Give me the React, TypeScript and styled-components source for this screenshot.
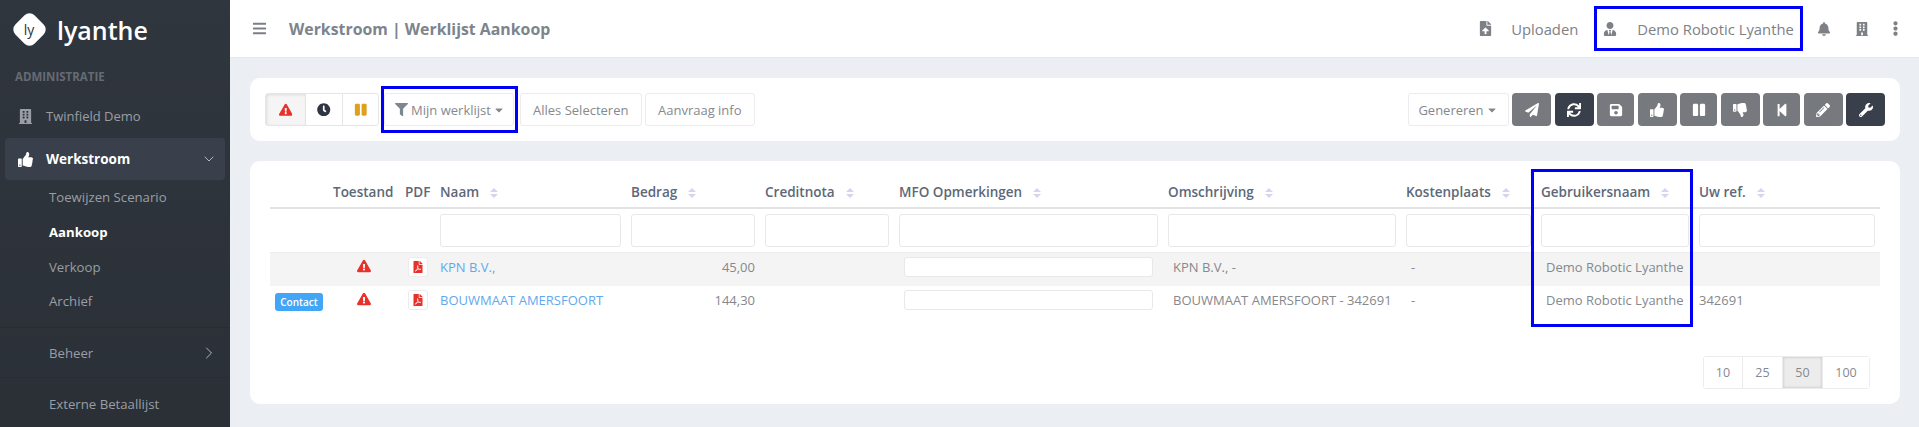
import React from 'react'
import styled, {createGlobalStyle} from 'styled-components'
import {ChevronDown, ChevronRight} from 'lucide-react'
import {
    FaBars, FaBell, FaBuilding, FaCaretDown, FaClock, FaEllipsisV,
    FaExclamationTriangle, FaFilePdf, FaFileUpload, FaFilter, FaPaperPlane, FaPause, FaPencilAlt,
    FaSave, FaStepBackward, FaSync, FaThumbsDown, FaThumbsUp, FaUserTie, FaWrench,
} from 'react-icons/fa'

const columns = [
    {width: 58},
    {width: 72, title: 'Toestand'},
    {width: 35, title: 'PDF'},
    {width: 191, title: 'Naam', sort: true, filter: true},
    {width: 134, title: 'Bedrag', sort: true, filter: true},
    {width: 134, title: 'Creditnota', sort: true, filter: true},
    {width: 269, title: 'MFO Opmerkingen', sort: true, filter: true},
    {width: 238, title: 'Omschrijving', sort: true, filter: true},
    {width: 135, title: 'Kostenplaats', sort: true, filter: true},
    {width: 158, title: 'Gebruikersnaam', sort: true, filter: true},
    {width: 186, title: 'Uw ref.', sort: true, filter: true},
]

const rows = [
    {contact: false, name: 'KPN B.V.,', amount: '45,00', description: 'KPN B.V., -', ref: ''},
    {contact: true, name: 'BOUWMAAT AMERSFOORT', amount: '144,30', description: 'BOUWMAAT AMERSFOORT - 342691', ref: '342691'},
]

const actions = [
    {icon: <FaPaperPlane/>, width: 39},
    {icon: <FaSync/>, width: 39, dark: true},
    {icon: <FaSave/>, width: 37},
    {icon: <FaThumbsUp/>, width: 39},
    {icon: <FaPause/>, width: 37},
    {icon: <FaThumbsDown/>, width: 39},
    {icon: <FaStepBackward/>, width: 37},
    {icon: <FaPencilAlt/>, width: 39},
    {icon: <FaWrench/>, width: 39, dark: true},
]

const SortIcon = () => (
    <SortSvg viewBox="0 0 8 10" width="8" height="10">
        <path d="M4 0 8 4H0Z M4 10 0 6H8Z" fill="#d6d4f2"/>
    </SortSvg>
)

export default function App() {
    return (
        <Page>
            <GlobalStyle/>
            <Sidebar>
                <Brand>
                    <LogoMark><LogoText>ly</LogoText></LogoMark>
                    <BrandName>lyanthe</BrandName>
                </Brand>
                <SectionLabel>ADMINISTRATIE</SectionLabel>
                <NavItem>
                    <NavIcon><FaBuilding/></NavIcon>
                    Twinfield Demo
                </NavItem>
                <ActiveNavItem>
                    <NavIcon $light><FaThumbsUp/></NavIcon>
                    Werkstroom
                    <Chevron $right={8}><ChevronDown size={16} strokeWidth={1.5}/></Chevron>
                </ActiveNavItem>
                <SubNav>
                    <SubItem>Toewijzen Scenario</SubItem>
                    <SubItem $active>Aankoop</SubItem>
                    <SubItem>Verkoop</SubItem>
                    <SubItem>Archief</SubItem>
                </SubNav>
                <NavGroup>
                    Beheer
                    <Chevron $right={11}><ChevronRight size={20} strokeWidth={1.2}/></Chevron>
                </NavGroup>
                <LastGroup>Externe Betaallijst</LastGroup>
            </Sidebar>
            <Main>
                <TopBar>
                    <Burger><FaBars/></Burger>
                    <PageTitle>Werkstroom | Werklijst Aankoop</PageTitle>
                    <TopActions>
                        <UploadIcon><FaFileUpload/></UploadIcon>
                        <TopText>Uploaden</TopText>
                        <UserBox>
                            <UserIcon><FaUserTie/></UserIcon>
                            <TopText>Demo Robotic Lyanthe</TopText>
                        </UserBox>
                        <BellIcon><FaBell/></BellIcon>
                        <BuildingIcon><FaBuilding/></BuildingIcon>
                        <DotsIcon><FaEllipsisV/></DotsIcon>
                    </TopActions>
                </TopBar>
                <Content>
                    <ToolbarCard>
                        <ButtonGroup>
                            <GroupButton $width={41} $active $color="#e8312a"><FaExclamationTriangle/></GroupButton>
                            <GroupButton $width={38} $color="#2f3542"><FaClock/></GroupButton>
                            <GroupButton $width={37} $color="#dfa11d"><FaPause/></GroupButton>
                        </ButtonGroup>
                        <FilterHighlight>
                            <PlainButton $width={130}>
                                <FilterIcon><FaFilter/></FilterIcon>
                                Mijn werklijst
                                <Caret><FaCaretDown/></Caret>
                            </PlainButton>
                        </FilterHighlight>
                        <PlainButton $width={121.5}>Alles Selecteren</PlainButton>
                        <PlainButton $width={109.5}>Aanvraag info</PlainButton>
                        <RightTools>
                            <PlainButton $width={101}>
                                Genereren
                                <Caret><FaCaretDown/></Caret>
                            </PlainButton>
                            {actions.map((action, index) => (
                                <ActionButton key={index} $width={action.width} $dark={action.dark}>
                                    {action.icon}
                                </ActionButton>
                            ))}
                        </RightTools>
                    </ToolbarCard>
                    <TableCard>
                        <ColumnHighlight/>
                        <Table>
                            <colgroup>
                                {columns.map((column, index) => <Column key={index} $width={column.width}/>)}
                            </colgroup>
                            <thead>
                                <tr>
                                    {columns.map((column, index) => (
                                        <HeadCell key={index}>
                                            {column.title}
                                            {column.sort && <SortIcon/>}
                                        </HeadCell>
                                    ))}
                                </tr>
                                <tr>
                                    {columns.map((column, index) => (
                                        <FilterCell key={index}>
                                            {column.filter && <FilterInput/>}
                                        </FilterCell>
                                    ))}
                                </tr>
                            </thead>
                            <tbody>
                                {rows.map((row, index) => (
                                    <Row key={row.name} $odd={index === 0}>
                                        <BadgeCell>{row.contact && <Badge>Contact</Badge>}</BadgeCell>
                                        <CenterCell><WarnIcon><FaExclamationTriangle/></WarnIcon></CenterCell>
                                        <CenterCell><PdfButton><FaFilePdf/></PdfButton></CenterCell>
                                        <Cell><NameLink>{row.name}</NameLink></Cell>
                                        <AmountCell>{row.amount}</AmountCell>
                                        <Cell/>
                                        <NoteCell><NoteInput/></NoteCell>
                                        <WideCell>{row.description}</WideCell>
                                        <WideCell>-</WideCell>
                                        <WideCell>Demo Robotic Lyanthe</WideCell>
                                        <Cell>{row.ref}</Cell>
                                    </Row>
                                ))}
                            </tbody>
                        </Table>
                        <PagerRow>
                            <Pager>
                                <PageButton $width={39}>10</PageButton>
                                <PageButton $width={40}>25</PageButton>
                                <PageButton $width={40} $active>50</PageButton>
                                <PageButton $width={46}>100</PageButton>
                            </Pager>
                        </PagerRow>
                    </TableCard>
                </Content>
            </Main>
        </Page>
    )
}

const GlobalStyle = createGlobalStyle`
  html, body {
    margin: 0;
    height: 100%;
    overflow: hidden;
  }

  body {
    background: #ebeef3;
    color: #7b7f85;
    font-family: "Open Sans", "Liberation Sans", sans-serif;
    font-size: 13px;
  }

  * {
    box-sizing: border-box;
  }
`
const Page = styled.div`
  display: grid;
  grid-template-columns: 230px 1fr;
  height: 427px;
  overflow: hidden;
`
const Sidebar = styled.aside`
  display: flex;
  flex-direction: column;
  background: linear-gradient(#30363e, #2b3037);
  color: #9a9ea4;
  font-size: 13px;
  height: 427px;
  overflow: hidden;

  & > * {
    flex: none;
  }
`
const Brand = styled.div`
  display: flex;
  align-items: center;
  height: 58px;
  padding: 1px 0 0 16px;
  gap: 11px;
`
const LogoMark = styled.div`
  display: flex;
  align-items: center;
  justify-content: center;
  width: 27px;
  height: 27px;
  background: #fff;
  border-radius: 7px;
  transform: rotate(45deg);
`
const LogoText = styled.span`
  transform: rotate(-45deg);
  color: #2d333b;
  font-size: 14px;
  line-height: 14px;
`
const BrandName = styled.span`
  margin-left: 3px;
  color: #fff;
  font-size: 25px;
  font-weight: 600;
  line-height: 30px;
`
const SectionLabel = styled.div`
  padding: 11px 0 0 15px;
  color: #656b73;
  font-size: 11.5px;
  font-weight: 700;
  line-height: 16px;
`
const NavItem = styled.div`
  display: flex;
  align-items: center;
  height: 42px;
  margin-top: 10px;
  padding: 0 0 0 18px;
`
const ActiveNavItem = styled.div`
  display: flex;
  align-items: center;
  height: 42px;
  margin: 1px 5px 0;
  padding: 0 0 0 13px;
  background: #3a404b;
  border-radius: 4px;
  color: #fff;
  font-size: 13.5px;
  font-weight: 700;
`
const NavIcon = styled.span<{ $light?: boolean }>`
  display: inline-flex;
  width: 28px;
  color: ${p => p.$light ? '#fff' : '#9a9ea4'};
  font-size: 15px;
`
const Chevron = styled.span<{ $right: number }>`
  display: inline-flex;
  margin-left: auto;
  margin-right: ${p => p.$right}px;
  color: #b5b8bd;
`
const SubNav = styled.div`
  display: flex;
  flex-direction: column;
  padding: 0 0 8px 49px;
  border-bottom: 1px solid #282d34;
  font-size: 13.2px;
`
const SubItem = styled.div<{ $active?: boolean }>`
  height: 34.75px;
  line-height: 34.75px;
  color: ${p => p.$active ? '#fff' : '#9a9ea4'};
  font-weight: ${p => p.$active ? 700 : 400};
`
const NavGroup = styled.div`
  display: flex;
  align-items: center;
  height: 50px;
  padding-left: 49px;
  border-bottom: 1px solid #282d34;
  font-size: 13.2px;
`
const LastGroup = styled.div`
  height: 52px;
  line-height: 52px;
  padding-left: 49px;
  font-size: 13.2px;
`
const Main = styled.main`
  display: flex;
  flex-direction: column;
  min-width: 0;
`
const TopBar = styled.header`
  display: flex;
  align-items: center;
  flex: none;
  height: 58px;
  background: #fff;
  border-bottom: 1px solid #e6e8ec;
`
const Burger = styled.span`
  display: inline-flex;
  margin-left: 22px;
  color: #7b8088;
  font-size: 15px;
`
const PageTitle = styled.h1`
  margin: 0 0 0 22px;
  color: #7d848c;
  font-size: 15.85px;
  font-weight: 700;
`
const TopActions = styled.div`
  display: flex;
  align-items: center;
  margin-left: auto;
  color: #7d8186;
`
const TopText = styled.span`
  font-size: 14.8px;
`
const UploadIcon = styled.span`
  display: inline-flex;
  margin-right: 18px;
  font-size: 15px;
`
const UserBox = styled.div`
  display: flex;
  align-items: center;
  height: 45px;
  margin-left: 16px;
  padding: 0 6px;
  border: 3px solid #0000f5;
`
const UserIcon = styled.span`
  display: inline-flex;
  margin-right: 20px;
  font-size: 14px;
`
const BellIcon = styled.span`
  display: inline-flex;
  margin-left: 13.7px;
  font-size: 14px;
`
const BuildingIcon = styled.span`
  display: inline-flex;
  margin-left: 24px;
  font-size: 14px;
`
const DotsIcon = styled.span`
  display: inline-flex;
  margin: 0 16px 0 19.5px;
  font-size: 15px;
`
const Content = styled.div`
  display: flex;
  flex-direction: column;
  gap: 20px;
  padding: 20px 19px 0 20px;
`
const ToolbarCard = styled.section`
  display: flex;
  align-items: center;
  height: 63px;
  padding: 0 15px;
  background: #fff;
  border-radius: 10px;
`
const ButtonGroup = styled.div`
  display: flex;
  margin-right: 5px;
`
const GroupButton = styled.div<{ $width: number; $active?: boolean; $color: string }>`
  display: flex;
  align-items: center;
  justify-content: center;
  width: ${p => p.$width}px;
  height: 33px;
  border: 1px solid #e5e6e8;
  margin-left: -1px;
  background: ${p => p.$active ? '#f5f5f5' : '#fff'};
  box-shadow: ${p => p.$active ? 'inset 1px 1px 3px rgba(0, 0, 0, .1)' : 'none'};
  color: ${p => p.$color};
  font-size: 13.5px;

  &:first-child {
    margin-left: 0;
    border-radius: 3px 0 0 3px;
  }

  &:last-child {
    border-radius: 0 3px 3px 0;
  }
`
const PlainButton = styled.div<{ $width: number }>`
  display: flex;
  align-items: center;
  justify-content: center;
  width: ${p => p.$width}px;
  height: 33px;
  margin-right: 3.5px;
  border: 1px solid #ececee;
  border-radius: 3px;
  background: #fff;
  color: #85898e;
  font-size: 13px;
`
const FilterHighlight = styled.div`
  position: relative;
  margin-right: 6px;

  & > div {
    margin-right: 0;
    padding-left: 2px;
  }

  &::after {
    content: '';
    position: absolute;
    inset: -7px -4px -7px -3.5px;
    border: 3px solid #0000f5;
  }
`
const FilterIcon = styled.span`
  display: inline-flex;
  margin-right: 3px;
  color: #7d8790;
  font-size: 13px;
`
const Caret = styled.span`
  display: inline-flex;
  margin-left: 2px;
  color: #85898e;
  font-size: 12px;
`
const RightTools = styled.div`
  display: flex;
  align-items: center;
  gap: 3.5px;
  margin-left: auto;

  & > div {
    margin-right: 0;
  }
`
const ActionButton = styled.div<{ $width: number; $dark?: boolean }>`
  display: flex;
  align-items: center;
  justify-content: center;
  width: ${p => p.$width}px;
  height: 33px;
  border-radius: 4px;
  background: ${p => p.$dark ? '#3a404b' : '#76797d'};
  color: #fff;
  font-size: 14px;
`
const TableCard = styled.section`
  position: relative;
  height: 243px;
  padding: 20px 20px 15px;
  background: #fff;
  border-radius: 10px;
`
const ColumnHighlight = styled.div`
  position: absolute;
  left: 1281px;
  top: 8px;
  width: 162px;
  height: 158px;
  border: 3px solid #0000f5;
  pointer-events: none;
`
const Table = styled.table`
  width: 1610px;
  table-layout: fixed;
  border-collapse: collapse;
`
const Column = styled.col<{ $width: number }>`
  width: ${p => p.$width}px;
`
const HeadCell = styled.th`
  height: 27px;
  padding: 0 5px 5px;
  border-bottom: 2px solid #e2e3e5;
  color: #5d6878;
  font-size: 13.5px;
  font-weight: 600;
  text-align: left;
  white-space: nowrap;
`
const SortSvg = styled.svg`
  margin-left: 11px;
  vertical-align: -1px;
`
const FilterCell = styled.td`
  height: 44px;
  padding: 5px;
  border-bottom: 1px solid #ececec;
`
const FilterInput = styled.div`
  height: 33px;
  border: 1px solid #e8e8ea;
  border-radius: 3px;
  background: #fff;
`
const Row = styled.tr<{ $odd?: boolean }>`
  height: 33px;
  background: ${p => p.$odd ? '#f4f4f4' : '#fff'};
`
const Cell = styled.td`
  padding: 0 5px 4px;
  color: #85888d;
  font-size: 13px;
  white-space: nowrap;
`
const BadgeCell = styled(Cell)`
  padding: 0 5px;
`
const CenterCell = styled(Cell)`
  text-align: center;
`
const AmountCell = styled(Cell)`
  text-align: right;
`
const WideCell = styled(Cell)`
  padding-left: 10px;
`
const NoteCell = styled(Cell)`
  padding: 0 10px 4px;
`
const NoteInput = styled.div`
  height: 20px;
  border: 1px solid #e8e8ea;
  border-radius: 3px;
  background: #fff;
`
const Badge = styled.span`
  display: block;
  width: 48px;
  height: 18px;
  border-radius: 3px;
  background: #42a5f5;
  color: #fff;
  font-size: 10px;
  font-weight: 600;
  line-height: 18px;
  text-align: center;
`
const WarnIcon = styled.span`
  display: inline-flex;
  padding-top: 1px;
  color: #e8312a;
  font-size: 14px;
`
const PdfButton = styled.span`
  display: inline-flex;
  align-items: center;
  justify-content: center;
  width: 20px;
  height: 20px;
  border: 1px solid #ececee;
  border-radius: 3px;
  background: #fff;
  color: #e8312a;
  font-size: 12px;
`
const NameLink = styled.span`
  color: #62a8ee;
`
const PagerRow = styled.div`
  display: flex;
  justify-content: flex-end;
  margin: 37px 10px 0 0;
`
const Pager = styled.div`
  display: flex;
  height: 33px;
  border: 1px solid #ececee;
  border-radius: 3px;
`
const PageButton = styled.div<{ $width: number; $active?: boolean }>`
  width: ${p => p.$width}px;
  border-right: 1px solid #ececee;
  background: ${p => p.$active ? '#ececec' : '#fff'};
  box-shadow: ${p => p.$active ? 'inset 0 0 3px rgba(0, 0, 0, .2)' : 'none'};
  color: #85898e;
  font-size: 12.5px;
  line-height: 31px;
  text-align: center;

  &:last-child {
    border-right: none;
  }
`
